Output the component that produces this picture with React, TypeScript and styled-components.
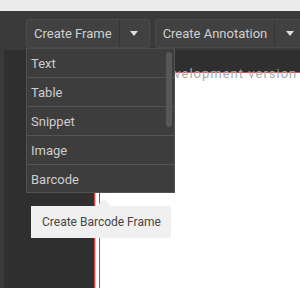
import React from 'react'
import styled, {createGlobalStyle} from 'styled-components'

const GlobalStyle = createGlobalStyle`
  html, body {
    margin: 0;
    padding: 0;
    background: #2f2f2f;
  }
  body {
    font-family: Roboto, "Liberation Sans", sans-serif;
  }
`

const menuItems = ['Text', 'Table', 'Snippet', 'Image', 'Barcode']

const App: React.FC = () => {
  return (
    <>
      <GlobalStyle />
      <StyledApp>
        <StyledTopStrip />
        <StyledToolbar>
          <StyledSplitWrapper>
            <SplitButton label="Create Frame" />
            <StyledMenu>
              {menuItems.map((item) => (
                <StyledMenuItem key={item}>{item}</StyledMenuItem>
              ))}
              <StyledScrollThumb />
            </StyledMenu>
            <StyledTooltip>Create Barcode Frame</StyledTooltip>
          </StyledSplitWrapper>
          <SplitButton label="Create Annotation" />
        </StyledToolbar>
        <StyledBody>
          <StyledSideEdge />
          <StyledCanvas>
            <StyledPage>
              <StyledGuide />
            </StyledPage>
            <StyledWatermark>Development version</StyledWatermark>
          </StyledCanvas>
        </StyledBody>
      </StyledApp>
    </>
  )
}

interface SplitButtonProps {
  label: string
}

const SplitButton: React.FC<SplitButtonProps> = ({label}) => (
  <StyledSplitButton>
    <StyledMainPart>{label}</StyledMainPart>
    <StyledArrowPart>
      <svg width="8" height="5" viewBox="0 0 8 5">
        <path d="M0 0 L8 0 L4 5 Z" fill="#dcdcdc" />
      </svg>
    </StyledArrowPart>
  </StyledSplitButton>
)

const StyledApp = styled.div`
  width: 300px;
  height: 288px;
  overflow: hidden;
  display: flex;
  flex-direction: column;
`

const StyledTopStrip = styled.div`
  height: 11px;
  background: #ebebeb;
  flex-shrink: 0;
`

const StyledToolbar = styled.div`
  height: 39px;
  flex-shrink: 0;
  background: #3a3a3a;
  display: flex;
  align-items: flex-start;
  gap: 5px;
  padding: 8px 0 0 26px;
  box-sizing: border-box;
  position: relative;
  z-index: 2;
`

const StyledSplitWrapper = styled.div`
  position: relative;
`

const StyledSplitButton = styled.div`
  display: flex;
  height: 29px;
  box-sizing: border-box;
  background: #414141;
  border: 1px solid #4b4b4b;
  border-radius: 3px;
  flex-shrink: 0;
`

const StyledMainPart = styled.div`
  display: flex;
  align-items: center;
  padding: 0 7px 0 7px;
  font-size: 13px;
  color: #d0d0d0;
  white-space: nowrap;
  border-right: 1px solid #363636;
`

const StyledArrowPart = styled.div`
  width: 29px;
  display: flex;
  align-items: center;
  justify-content: center;
`

const StyledMenu = styled.div`
  position: absolute;
  top: 29px;
  left: 0;
  width: 149px;
  height: 145px;
  box-sizing: border-box;
  background: #3d3d3d;
  border: 1px solid #535353;
  border-top: 1px solid #4a4a4a;
  overflow: hidden;
`

const StyledMenuItem = styled.div`
  height: 29px;
  box-sizing: border-box;
  border-bottom: 1px solid #555555;
  display: flex;
  align-items: center;
  padding-left: 4px;
  font-size: 13px;
  color: #cdcdcd;
  &:last-of-type {
    border-bottom: none;
  }
`

const StyledScrollThumb = styled.div`
  position: absolute;
  top: 3px;
  right: 2px;
  width: 6px;
  height: 75px;
  border-radius: 3px;
  background: #575757;
`

const StyledTooltip = styled.div`
  position: absolute;
  top: 187px;
  left: 5px;
  width: 140px;
  height: 32px;
  box-sizing: border-box;
  background: #f0f0f0;
  color: #454545;
  font-size: 12px;
  display: flex;
  align-items: center;
  padding-left: 11px;
  white-space: nowrap;
  &::before {
    content: '';
    position: absolute;
    top: -7px;
    left: 66px;
    border-left: 7px solid transparent;
    border-right: 7px solid transparent;
    border-bottom: 7px solid #f0f0f0;
  }
`

const StyledBody = styled.div`
  flex: 1;
  display: flex;
  min-height: 0;
`

const StyledSideEdge = styled.div`
  width: 4px;
  background: #3a3a3a;
  flex-shrink: 0;
`

const StyledCanvas = styled.div`
  flex: 1;
  position: relative;
  background: #2f2f2f;
  padding: 22px 0 0 90px;
  display: flex;
`

const StyledPage = styled.div`
  flex: 1;
  background: #ffffff;
  border-top: 1px solid #e04a4a;
  border-left: 1px solid #d84848;
  box-shadow: inset 1px 0 0 #f5b3b3;
  padding-left: 4px;
  display: flex;
`

const StyledGuide = styled.div`
  width: 1px;
  background: #666666;
`

const StyledWatermark = styled.div`
  position: absolute;
  top: 17px;
  left: 153px;
  font-size: 13px;
  line-height: 13px;
  letter-spacing: 1px;
  color: #aaaaaa;
  white-space: nowrap;
`

export default App
